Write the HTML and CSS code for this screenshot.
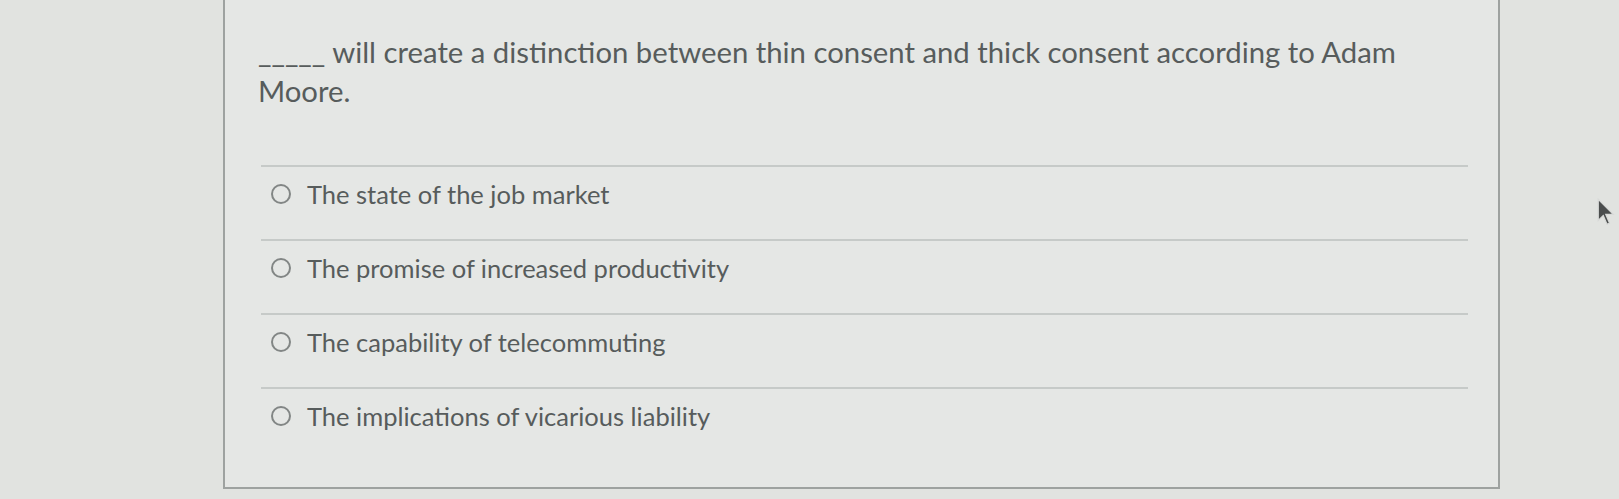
FILE: index.html
```html
<!DOCTYPE html>
<html>
<head>
<meta charset="utf-8">
<link rel="stylesheet" href="styles.css">
</head>
<body>
<div class="page">
  <div class="card">
    <p class="question">_____ will create a distinction between thin consent and thick consent according to Adam Moore.</p>
    <ul class="options">
      <li class="option"><span class="radio"></span><span class="label">The state of the job market</span></li>
      <li class="option"><span class="radio"></span><span class="label">The promise of increased productivity</span></li>
      <li class="option"><span class="radio"></span><span class="label">The capability of telecommuting</span></li>
      <li class="option"><span class="radio"></span><span class="label">The implications of vicarious liability</span></li>
    </ul>
  </div>
  <svg class="cursor" width="20" height="30" viewBox="0 0 16 24"><path d="M1 1 L1 18 L5 14 L8 21 L10 20 L7 13 L13 13 Z" fill="#4a4d4d" stroke="#d8dad8" stroke-width="1"/></svg>
</div>
</body>
</html>
```

FILE: styles.css
```css
html, body {
  margin: 0;
  padding: 0;
  background: #e1e3e0;
}
.page {
  position: relative;
  width: 1619px;
  height: 499px;
  overflow: hidden;
  font-family: Lato, "Open Sans", sans-serif;
  color: #575c5c;
}
.card {
  margin-left: 223px;
  width: 1240px;
  height: 487px;
  border: 2px solid #9ea2a0;
  border-top: none;
  background: #e5e7e5;
  padding: 0 0 0 33px;
}
.question {
  margin: 0;
  padding-top: 32px;
  width: 1190px;
  font-size: 29.3px;
  line-height: 39px;
}
.options {
  list-style: none;
  margin: 55px 0 0 3px;
  padding: 0;
  width: 1207px;
}
.option {
  display: flex;
  align-items: center;
  height: 54px;
  padding-bottom: 18px;
  border-top: 2px solid #c6cac8;
  padding-left: 10px;
  font-size: 25.5px;
  line-height: 30px;
}
.radio {
  width: 16px;
  height: 16px;
  border: 2.5px solid #828685;
  border-radius: 50%;
  margin-right: 16px;
  flex: none;
}
.cursor {
  position: absolute;
  left: 1597px;
  top: 198px;
}
```
